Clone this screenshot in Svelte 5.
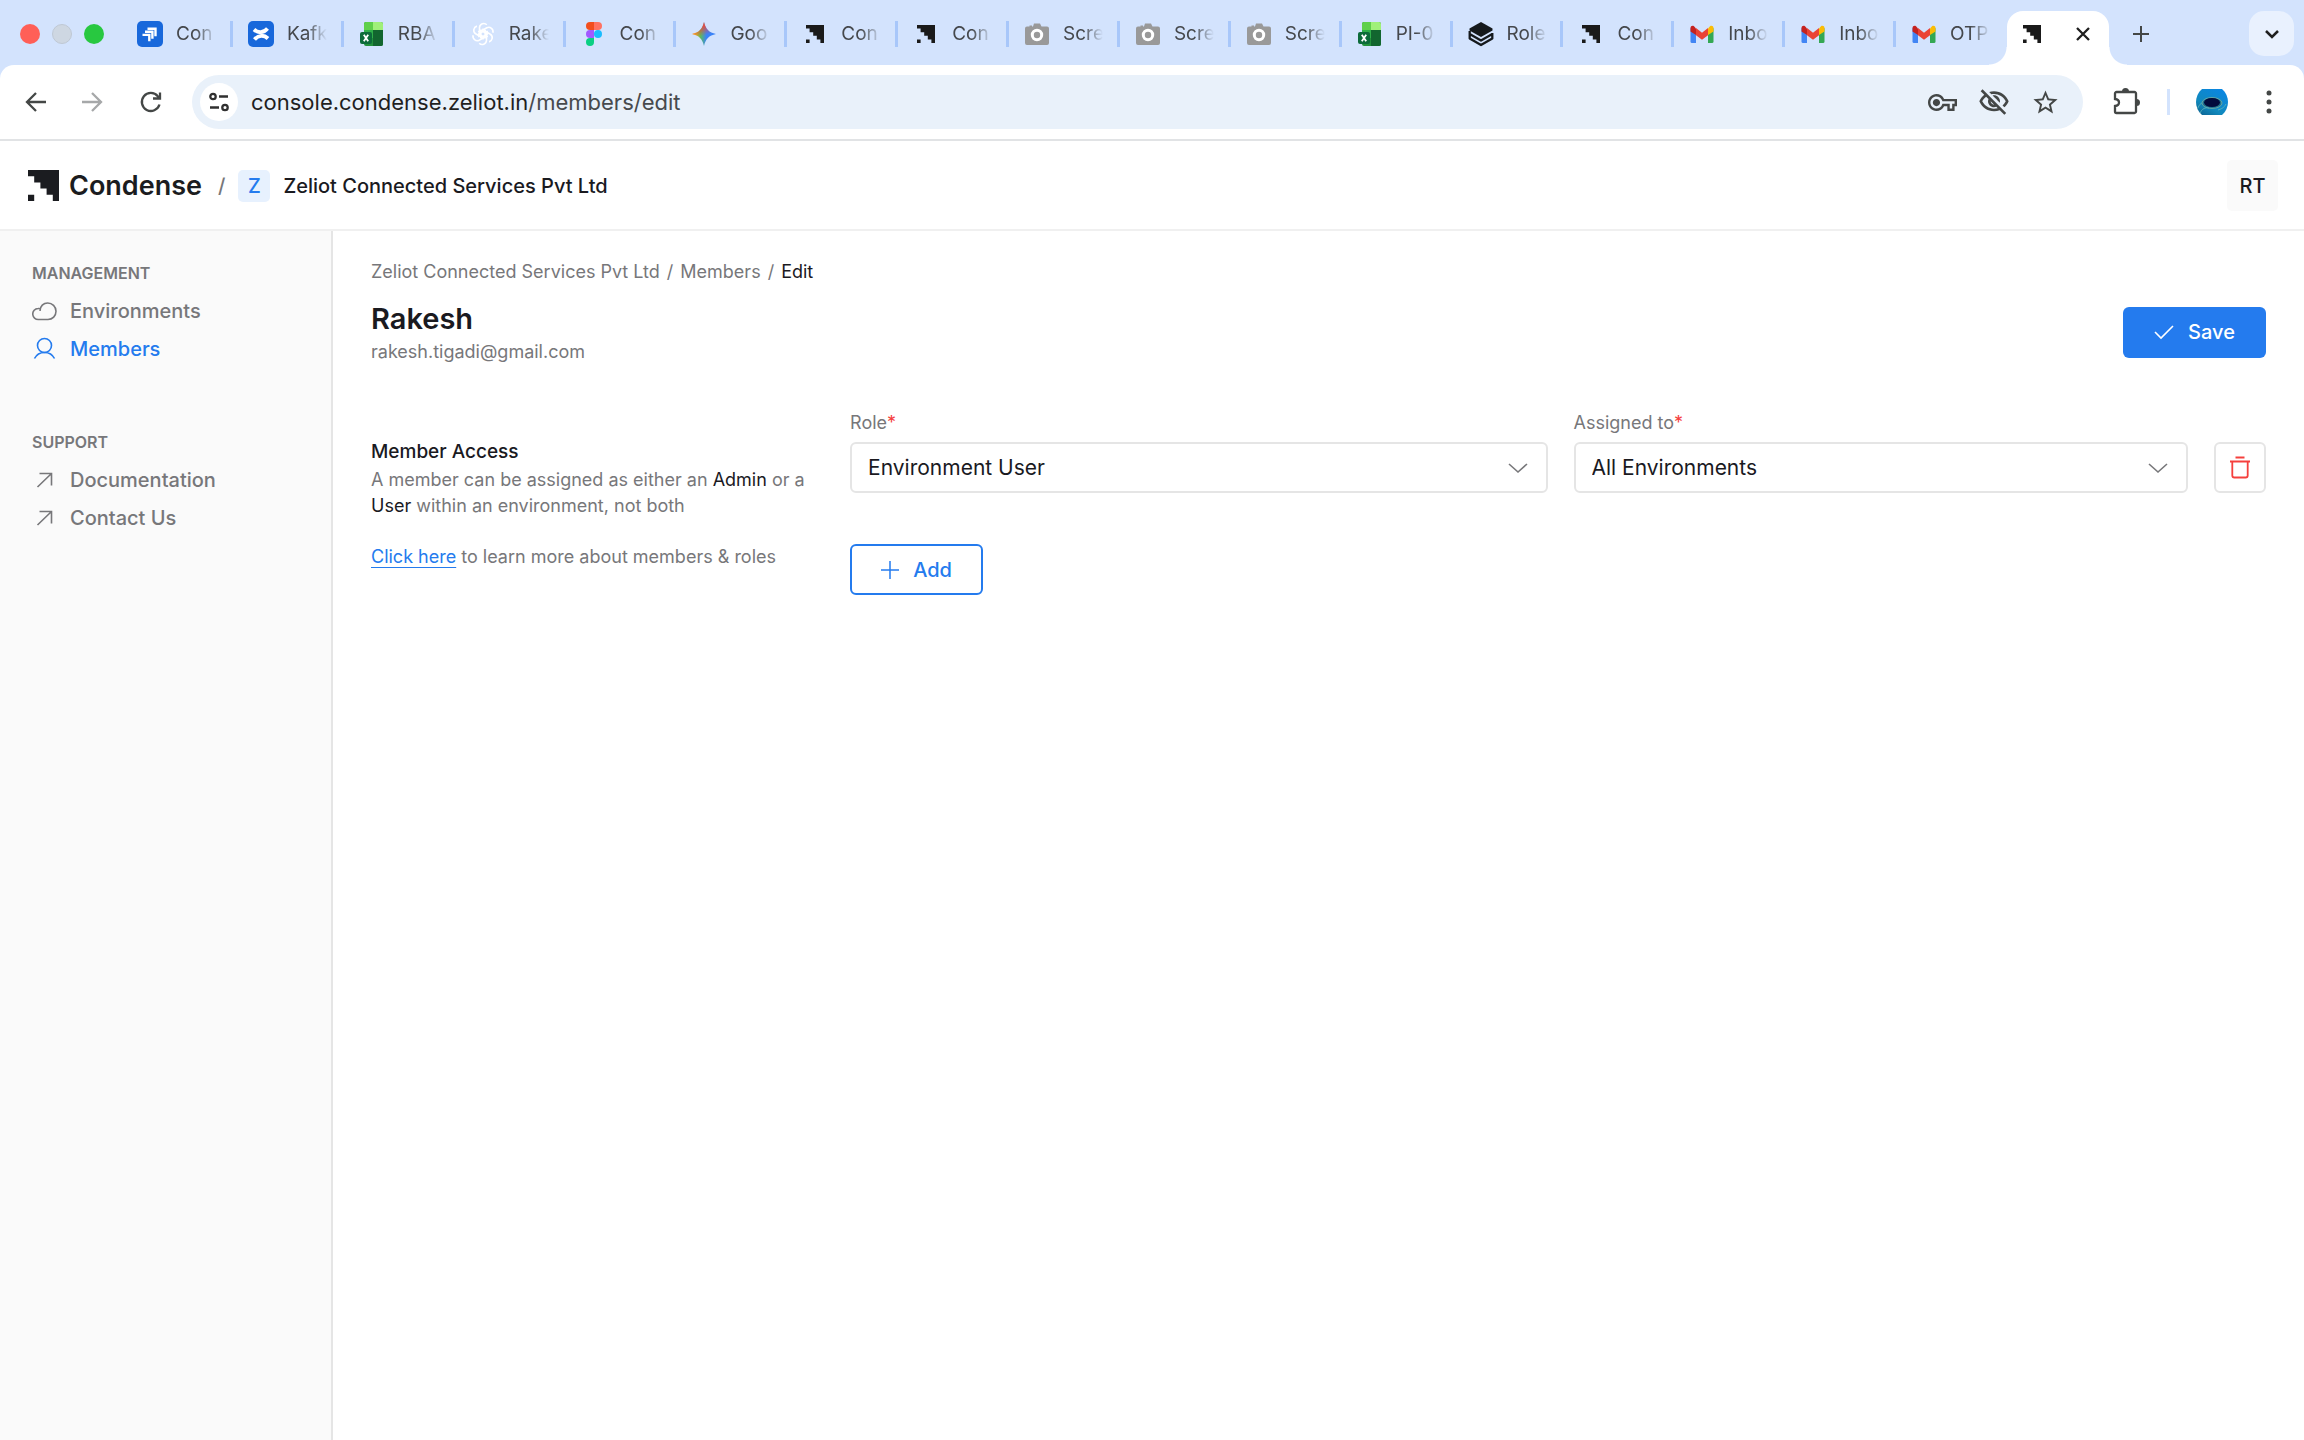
<script lang="ts">
  interface Tab {
    icon: string;
    title: string;
  }

  const tabs: Tab[] = [
    { icon: 'jira', title: 'Con' },
    { icon: 'confluence', title: 'Kafk' },
    { icon: 'excel', title: 'RBA' },
    { icon: 'openai', title: 'Rake' },
    { icon: 'figma', title: 'Con' },
    { icon: 'gemini', title: 'Goo' },
    { icon: 'condense', title: 'Con' },
    { icon: 'condense', title: 'Con' },
    { icon: 'camera', title: 'Scre' },
    { icon: 'camera', title: 'Scre' },
    { icon: 'camera', title: 'Scre' },
    { icon: 'excel', title: 'PI-0' },
    { icon: 'gitbook', title: 'Role' },
    { icon: 'condense', title: 'Con' },
    { icon: 'gmail', title: 'Inbo' },
    { icon: 'gmail', title: 'Inbo' },
    { icon: 'gmail', title: 'OTP' },
  ];

  const management = [
    { icon: 'cloud', label: 'Environments', active: false },
    { icon: 'user', label: 'Members', active: true },
  ];

  const support = [
    { icon: 'arrow', label: 'Documentation', active: false },
    { icon: 'arrow', label: 'Contact Us', active: false },
  ];

  let role = $state('Environment User');
  let assignedTo = $state('All Environments');
</script>

{#snippet mark()}
  <path d="M0 0H5V5H4V4H3V3H2V2H1V1H0ZM0 4H1V5H0Z" fill="currentColor" />
{/snippet}

{#snippet favicon(name: string)}
  <svg class="favicon" viewBox="0 0 26 26" aria-hidden="true">
    {#if name === 'jira'}
      <rect width="26" height="26" rx="5" fill="#1868db" />
      <path d="M10.500 7.700h8v7.500M8 10.800h7.400v7M5.500 13.900h6.800v6.400" stroke="#fff" stroke-width="2.400" fill="none" />
    {:else if name === 'confluence'}
      <rect width="26" height="26" rx="5" fill="#1868db" />
      <path d="M6 8.500c4 3.800 9.500 3.800 13.500-1" stroke="#fff" stroke-width="3.800" fill="none" />
      <path d="M6.500 18.500c4-4.800 9.500-4.800 13.500-1" stroke="#fff" stroke-width="3.800" fill="none" />
    {:else if name === 'excel'}
      <rect x="5" y="1" width="19" height="24" rx="2" fill="#22913b" />
      <path d="M7 1h7v8H5V3a2 2 0 0 1 2-2z" fill="#5fd04a" />
      <path d="M14 1h8a2 2 0 0 1 2 2v6H14z" fill="#a0f079" />
      <path d="M14 9h10v14a2 2 0 0 1-2 2h-8z" fill="#12662f" />
      <path d="M5 9h9v8H5z" fill="#2fb04a" />
      <rect x="1" y="11" width="12" height="12" rx="2" fill="#0c6b3a" />
      <path d="M4.800 13.800l4.400 6.400M9.200 13.800l-4.400 6.400" stroke="#fff" stroke-width="1.800" />
    {:else if name === 'openai'}
      <g fill="none" stroke="#fff" stroke-width="1.600">
        {#each [0, 60, 120, 180, 240, 300] as angle}
          <path d="M9.500 8.200V6.500a4.300 4.300 0 0 1 7.300-2.700M9.500 7v6.500l5.500 3.200 2.800-1.700" transform="rotate({angle} 13 13)" />
        {/each}
      </g>
    {:else if name === 'figma'}
      <path d="M13 1H9a4 4 0 0 0 0 8h4z" fill="#f24e1e" />
      <path d="M13 1h4a4 4 0 0 1 0 8h-4z" fill="#ff7262" />
      <path d="M13 9H9a4 4 0 0 0 0 8h4z" fill="#a259ff" />
      <circle cx="17" cy="13" r="4" fill="#1abcfe" />
      <path d="M13 17H9a4 4 0 1 0 4 4z" fill="#0acf83" />
    {:else if name === 'gemini'}
      <defs>
        <linearGradient id="geminiBase" x1="0" y1="0" x2="1" y2="0">
          <stop offset="0.100" stop-color="#f8c51c" />
          <stop offset="0.350" stop-color="#5bbd5a" />
          <stop offset="0.600" stop-color="#3b83f7" />
        </linearGradient>
        <linearGradient id="geminiTop" x1="0.400" y1="0" x2="0.600" y2="0.600">
          <stop offset="0.200" stop-color="#f54336" />
          <stop offset="0.900" stop-color="#f54336" stop-opacity="0" />
        </linearGradient>
      </defs>
      <path d="M13 1c1.500 7 5 10.500 12 12-7 1.500-10.500 5-12 12-1.500-7-5-10.500-12-12 7-1.500 10.500-5 12-12z" fill="url(#geminiBase)" />
      <path d="M13 1c1.500 7 5 10.500 12 12-7 1.500-10.500 5-12 12-1.500-7-5-10.500-12-12 7-1.500 10.500-5 12-12z" fill="url(#geminiTop)" />
    {:else if name === 'condense'}
      <g class="ink" transform="translate(4 4) scale(3.600)">{@render mark()}</g>
    {:else if name === 'camera'}
      <path d="M3 5.500h2.500V4.500h2.500v1h1L10 2.500h6l1.500 3H23a2 2 0 0 1 2 2V22a2 2 0 0 1-2 2H3a2 2 0 0 1-2-2V7.500a2 2 0 0 1 2-2z" fill="#999" />
      <circle cx="13" cy="14" r="4.700" fill="#999" stroke="#fff" stroke-width="3" />
    {:else if name === 'gitbook'}
      <path d="M13 1l11.500 6.500v2L13 16 1.500 9.500v-2z" fill="#15191c" />
      <path d="M1.700 10v3L13 19.500 24.300 13M1.700 13v4.500L13 24l11.300-6.500V12" fill="none" stroke="#15191c" stroke-width="2.300" stroke-linejoin="round" />
    {:else if name === 'gmail'}
      <path d="M1.500 7v13.500A1.500 1.500 0 0 0 3 22h4V11z" fill="#4285f4" />
      <path d="M24.500 7v13.500A1.500 1.500 0 0 1 23 22h-4V11z" fill="#34a853" />
      <path d="M19 7.500L21 5.300c1.400-1 3.500-.300 3.500 1.700v3.500L19 14z" fill="#fbbc04" />
      <path d="M7 7.500L5 5.300C3.600 4.300 1.500 5 1.500 7v3.500L7 14z" fill="#c5221f" />
      <path d="M7 7l6 4.800L19 7v7.300l-6 4.500-6-4.500z" fill="#ea4335" />
    {/if}
  </svg>
{/snippet}

{#snippet navIcon(name: string)}
  <svg class="nav-icon" viewBox="0 0 26 26" aria-hidden="true">
    {#if name === 'cloud'}
      <path d="M8.500 21.500H6.500a5.500 5.500 0 0 1-.500-11c1.200-.100 2.200.200 2.200.200M8 13c0-5 3.500-8 7.700-8a8.300 8.300 0 0 1 8.300 8.300c0 4.700-3.500 8.200-8 8.200H8" />
    {:else if name === 'user'}
      <circle cx="12.500" cy="9.500" r="7" />
      <path d="M2.500 22.500c2-4 5.500-6 10-6s8 2 10 6" />
    {:else}
      <path d="M7.500 6.500h12v12M19.500 6.500L5.500 20" />
    {/if}
  </svg>
{/snippet}

{#snippet navList(items: { icon: string; label: string; active: boolean }[])}
  <ul>
    {#each items as item}
      <li>
        <a href="#{item.label}" class:active={item.active}>
          {@render navIcon(item.icon)}
          {item.label}
        </a>
      </li>
    {/each}
  </ul>
{/snippet}

<div class="window">
  <div class="tab-strip">
    <div class="lights">
      <span class="light red"></span>
      <span class="light grey"></span>
      <span class="light green"></span>
    </div>
    <div class="tabs">
      {#each tabs as tab}
        <div class="tab">
          {@render favicon(tab.icon)}
          <span class="tab-title">{tab.title}</span>
        </div>
      {/each}
    </div>
    <div class="tab-active">
      {@render favicon('condense')}
      <button class="plain" aria-label="Close tab">
        <svg width="16" height="16" viewBox="0 0 16 16"><path d="M2 2l12 12M14 2L2 14" stroke="#1f1f1f" stroke-width="2.300" /></svg>
      </button>
    </div>
    <button class="plain new-tab" aria-label="New tab">
      <svg width="18" height="18" viewBox="0 0 18 18"><path d="M9 1v16M1 9h16" stroke="#444746" stroke-width="2" /></svg>
    </button>
    <button class="tab-search" aria-label="Search tabs">
      <svg width="16" height="16" viewBox="0 0 16 16"><path d="M2 5l6 6 6-6" fill="none" stroke="#1f1f1f" stroke-width="2.500" /></svg>
    </button>
  </div>

  <div class="toolbar">
    <div class="history">
      <button class="plain" aria-label="Back">
        <svg width="24" height="24" viewBox="0 0 24 24"><path d="M23 12H4M13 3l-9 9 9 9" fill="none" stroke="#444746" stroke-width="2.300" /></svg>
      </button>
      <button class="plain" aria-label="Forward">
        <svg width="24" height="24" viewBox="0 0 24 24"><path d="M1 12h19M11 3l9 9-9 9" fill="none" stroke="#a6a8a9" stroke-width="2.300" /></svg>
      </button>
      <button class="plain" aria-label="Reload">
        <svg width="24" height="24" viewBox="0 0 24 24"><path d="M20.500 14.500A9 9 0 1 1 18.800 6.200l2 2M21 2.500v6h-7" fill="none" stroke="#444746" stroke-width="2.300" /></svg>
      </button>
    </div>

    <div class="address">
      <button class="site-info" aria-label="View site information">
        <svg width="22" height="22" viewBox="0 0 22 22" fill="none" stroke="#303030" stroke-width="2.300">
          <circle cx="5" cy="5.500" r="2.700" /><path d="M11 5.500h9M2 16.500h9" /><circle cx="17" cy="16.500" r="2.700" />
        </svg>
      </button>
      <span class="url">console.condense.zeliot.in<span class="path">/members/edit</span></span>
      <div class="address-actions">
        <button class="plain" aria-label="Passwords">
          <svg width="29" height="29" viewBox="0 0 24 24"><path fill="#444746" d="M22 19h-6v-4h-2.680c-1.140 2.420-3.600 4-6.320 4-3.860 0-7-3.140-7-7s3.140-7 7-7c2.720 0 5.170 1.580 6.320 4H24v6h-2v4zm-4-2h2v-4h2v-2H11.940l-.230-.670C11.010 8.340 9.110 7 7 7c-2.760 0-5 2.240-5 5s2.240 5 5 5c2.110 0 4.010-1.340 4.710-3.330l.230-.670H18v4zM7 15c-1.650 0-3-1.350-3-3s1.350-3 3-3 3 1.350 3 3-1.350 3-3 3z" /></svg>
        </button>
        <button class="plain" aria-label="Third-party cookies blocked">
          <svg width="32" height="32" viewBox="0 0 24 24"><path fill="#444746" d="M12 6c3.790 0 7.170 2.130 8.820 5.500-.590 1.220-1.420 2.270-2.410 3.120l1.410 1.410c1.390-1.230 2.490-2.770 3.180-4.530C21.270 7.110 17 4 12 4c-1.270 0-2.490.200-3.640.570l1.650 1.650C10.660 6.090 11.320 6 12 6zm-1.070 1.140L13 9.210c.570.250 1.030.710 1.280 1.280l2.070 2.070c.080-.340.140-.700.140-1.070C16.500 9.010 14.480 7 12 7c-.370 0-.720.050-1.070.140zM2.010 3.870l2.680 2.680C3.060 7.830 1.770 9.530 1 11.500 2.730 15.890 7 19 12 19c1.520 0 2.980-.290 4.320-.820l3.420 3.420 1.410-1.410L3.420 2.450 2.010 3.870zm7.500 7.500l2.610 2.610c-.040.010-.080.020-.120.020-1.380 0-2.500-1.120-2.500-2.500 0-.050.010-.080.010-.130zm-3.400-3.400l1.750 1.750c-.230.550-.360 1.150-.360 1.780 0 2.480 2.020 4.500 4.500 4.500.630 0 1.230-.130 1.770-.360l.980.980c-.880.240-1.800.380-2.750.380-3.790 0-7.170-2.130-8.820-5.500.700-1.430 1.720-2.610 2.930-3.530z" /></svg>
        </button>
        <button class="plain" aria-label="Bookmark this tab">
          <svg width="29" height="29" viewBox="0 0 24 24"><path fill="#444746" d="M22 9.240l-7.190-.620L12 2 9.190 8.630 2 9.240l5.460 4.730L5.820 21 12 17.270 18.180 21l-1.630-7.030L22 9.240zM12 15.400l-3.760 2.270 1-4.280-3.320-2.880 4.380-.380L12 6.100l1.710 4.040 4.380.380-3.320 2.880 1 4.280L12 15.400z" /></svg>
        </button>
      </div>
    </div>

    <div class="toolbar-end">
      <button class="plain" aria-label="Extensions">
        <svg width="30" height="30" viewBox="0 0 30 30">
          <path d="M5.500 5h18a1.500 1.500 0 0 1 1.500 1.500v18a1.500 1.500 0 0 1-1.500 1.500h-18A1.500 1.500 0 0 1 4 24.500V19c2.500-.300 4-1.600 4-3.500s-1.500-3.200-4-3.500V6.500A1.500 1.500 0 0 1 5.500 5z" fill="none" stroke="#444746" stroke-width="2.300" />
          <path d="M11 4.500a3.500 3.500 0 0 1 7 0zM25.500 12a3.500 3.500 0 0 1 0 7z" fill="#444746" />
        </svg>
      </button>
      <span class="divider"></span>
      <button class="plain" aria-label="Profile">
        <svg width="32" height="26" viewBox="0 0 32 26">
          <defs>
            <linearGradient id="water" x1="0" y1="1" x2="0.700" y2="0">
              <stop offset="0" stop-color="#0c5f8c" />
              <stop offset="0.400" stop-color="#1189bd" />
              <stop offset="1" stop-color="#0a86e0" />
            </linearGradient>
            <clipPath id="avatar"><path d="M6 0h20c8 7 8 19 0 26H6C-2 19-2 7 6 0z" /></clipPath>
          </defs>
          <g clip-path="url(#avatar)">
            <rect width="32" height="26" fill="url(#water)" />
            <ellipse cx="16" cy="14" rx="10" ry="5.500" fill="#1f7390" stroke="#62a5a5" />
            <ellipse cx="16" cy="13.500" rx="8" ry="4.500" fill="#020b3c" />
            <path d="M1 21c2-5 3-6 5-7M4 24c2-4 5-6 9-5M22 21c3-1 6-2 8-6" stroke="#57b0bb" stroke-width="1" fill="none" />
          </g>
        </svg>
      </button>
      <button class="plain" aria-label="Menu">
        <svg width="6" height="24" viewBox="0 0 6 24" fill="#444746"><circle cx="3" cy="3" r="2.500" /><circle cx="3" cy="12" r="2.500" /><circle cx="3" cy="21" r="2.500" /></svg>
      </button>
    </div>
  </div>

  <header class="app-header">
    <a class="brand" href="#home">
      <svg width="31" height="31" viewBox="0 0 5 5" aria-hidden="true">{@render mark()}</svg>
      Condense
    </a>
    <span class="slash">/</span>
    <span class="org-badge">Z</span>
    <span class="org-name">Zeliot Connected Services Pvt Ltd</span>
    <button class="account">RT</button>
  </header>

  <div class="body">
    <nav class="sidebar">
      <section>
        <h2>MANAGEMENT</h2>
        {@render navList(management)}
      </section>
      <section>
        <h2>SUPPORT</h2>
        {@render navList(support)}
      </section>
    </nav>

    <main>
      <div class="breadcrumb">
        <a href="#org">Zeliot Connected Services Pvt Ltd</a>
        <span>/</span>
        <a href="#members">Members</a>
        <span>/</span>
        <span class="current">Edit</span>
      </div>

      <div class="page-head">
        <div>
          <h1>Rakesh</h1>
          <p class="email">rakesh.tigadi@gmail.com</p>
        </div>
        <button class="save">
          <svg width="20" height="20" viewBox="0 0 20 20"><path d="M1 10l6 6L19 4" fill="none" stroke="#fff" stroke-width="1.600" /></svg>
          Save
        </button>
      </div>

      <div class="access">
        <div class="access-info">
          <h3>Member Access</h3>
          <p>A member can be assigned as either an <b>Admin</b> or a <b>User</b> within an environment, not both</p>
          <p class="learn"><a href="#docs">Click here</a> to learn more about members &amp; roles</p>
        </div>

        <div class="access-form">
          <div class="fields">
            <div class="field">
              <label for="role">Role<span class="required">*</span></label>
              <div class="select">
                <select id="role" bind:value={role}>
                  <option>Environment User</option>
                </select>
                <svg width="20" height="20" viewBox="0 0 20 20"><path d="M1 6l9 8 9-8" /></svg>
              </div>
            </div>
            <div class="field">
              <label for="assigned">Assigned to<span class="required">*</span></label>
              <div class="select">
                <select id="assigned" bind:value={assignedTo}>
                  <option>All Environments</option>
                </select>
                <svg width="20" height="20" viewBox="0 0 20 20"><path d="M1 6l9 8 9-8" /></svg>
              </div>
            </div>
            <button class="remove" aria-label="Remove role">
              <svg width="20" height="24" viewBox="0 0 20 24" fill="none" stroke="#f5403d" stroke-width="1.800">
                <path d="M5.500 1.500h9M0 5.500h20M2.300 5.500V19.500a2 2 0 0 0 2 2h11.400a2 2 0 0 0 2-2V5.500" />
              </svg>
            </button>
          </div>
          <button class="add">
            <svg width="18" height="18" viewBox="0 0 18 18"><path d="M9 0v18M0 9h18" stroke="#247bee" stroke-width="1.500" /></svg>
            Add
          </button>
        </div>
      </div>
    </main>
  </div>
</div>

<style>
  :global(body) {
    background: #fff;
  }

  .window {
    display: flex;
    flex-direction: column;
    min-height: 100vh;
    font-family: Inter, "Liberation Sans", sans-serif;
    color: #1a1a1f;
  }

  .window *,
  .window *::before,
  .window *::after {
    box-sizing: border-box;
  }

  h1, h2, h3, p, ul {
    margin: 0;
    padding: 0;
  }

  a {
    color: inherit;
    text-decoration: none;
  }

  button,
  select {
    font: inherit;
    color: inherit;
    cursor: pointer;
  }

  button svg,
  .favicon {
    display: block;
    flex: none;
  }

  .plain {
    padding: 0;
    border: 0;
    background: none;
  }

  .ink {
    color: #1a1a1a;
  }

  /* tab strip */
  .tab-strip {
    display: flex;
    align-items: center;
    height: 65px;
    padding: 2px 10px 0 20px;
    background: #d3e3fd;
  }

  .lights {
    display: flex;
    gap: 12px;
    width: 102px;
  }

  .light {
    width: 20px;
    height: 20px;
    border-radius: 50%;
  }

  .red { background: #ff5f57; }
  .grey { background: #ced7e2; border: 1px solid #bfc8d4; }
  .green { background: #28c840; }

  .tabs {
    display: flex;
    flex: 1;
    min-width: 0;
  }

  .tab {
    display: flex;
    align-items: center;
    gap: 13px;
    flex: 1;
    min-width: 0;
    height: 26px;
    padding: 0 0 0 15px;
    border-right: 3px solid #a8c7fa;
  }

  .tab:last-child {
    border-color: transparent;
  }

  .favicon {
    width: 26px;
    height: 26px;
  }

  .tab-title {
    white-space: nowrap;
    font-size: 19px;
    line-height: 26px;
    color: #45484c;
    mask-image: linear-gradient(to right, #000 20px, transparent 40px);
  }

  .tab-active {
    position: relative;
    display: flex;
    align-items: center;
    justify-content: space-between;
    align-self: flex-end;
    width: 102px;
    height: 54px;
    padding: 0 18px 8px 12px;
    background: #fff;
    border-radius: 16px 16px 0 0;
  }

  .tab-active::before,
  .tab-active::after {
    content: '';
    position: absolute;
    bottom: 0;
    width: 18px;
    height: 18px;
  }

  .tab-active::before {
    right: 100%;
    background: radial-gradient(circle at 0 0, transparent 17px, #fff 18px);
  }

  .tab-active::after {
    left: 100%;
    background: radial-gradient(circle at 100% 0, transparent 17px, #fff 18px);
  }

  .new-tab {
    margin-left: 23px;
  }

  .tab-search {
    display: flex;
    align-items: center;
    justify-content: center;
    width: 45px;
    height: 45px;
    margin-left: 99px;
    border: 0;
    border-radius: 15px;
    background: #e9f1fe;
  }

  /* toolbar */
  .toolbar {
    display: flex;
    align-items: center;
    height: 76px;
    padding: 0 32px 0 23px;
    background: linear-gradient(#d3e3fd, #d3e3fd 16px, #fff 16px);
    border-bottom: 2px solid #e1e3e5;
    position: relative;
    z-index: 0;
  }

  .toolbar::before {
    content: '';
    position: absolute;
    z-index: -1;
    inset: 0;
    background: #fff;
    border-radius: 14px 14px 0 0;
  }

  .history {
    display: flex;
    gap: 34px;
  }

  .address {
    display: flex;
    align-items: center;
    flex: 1;
    height: 54px;
    margin-left: 29px;
    padding: 0 23px 0 8px;
    border-radius: 27px;
    background: #e9f1fa;
  }

  .site-info {
    display: flex;
    align-items: center;
    justify-content: center;
    width: 38px;
    height: 38px;
    padding: 0;
    border: 0;
    border-radius: 50%;
    background: #fff;
  }

  .url {
    flex: 1;
    margin-left: 13px;
    font-size: 22px;
    color: #1f1f1f;
  }

  .path {
    color: #474a4d;
  }

  .address-actions {
    display: flex;
    align-items: center;
    gap: 21px;
  }

  .toolbar-end {
    display: flex;
    align-items: center;
    gap: 26px;
    margin-left: 28px;
  }

  .toolbar-end button:last-child {
    margin-left: 12px;
  }

  .divider {
    width: 3px;
    height: 26px;
    background: #d3e3fd;
  }

  /* app header */
  .app-header {
    display: flex;
    align-items: center;
    height: 90px;
    padding: 1px 26px 0 28px;
    border-bottom: 2px solid #f0f0f0;
    font-size: 20px;
    font-weight: 500;
  }

  .brand {
    display: flex;
    align-items: center;
    gap: 10px;
    font-size: 27px;
    font-weight: 600;
    color: #1b1c20;
  }

  .slash {
    margin: 0 13px 0 16px;
    color: #77777a;
  }

  .org-badge {
    display: flex;
    align-items: center;
    justify-content: center;
    width: 32px;
    height: 32px;
    border-radius: 5px;
    background: #e7f1fe;
    color: #247bee;
  }

  .org-name {
    margin-left: 13px;
  }

  .account {
    width: 51px;
    height: 51px;
    margin-left: auto;
    padding: 0;
    border: 0;
    border-radius: 5px;
    background: #fafafa;
  }

  /* body */
  .body {
    display: flex;
    flex: 1;
  }

  .sidebar {
    flex: none;
    width: 333px;
    padding: 31px 32px;
    background: #fafafa;
    border-right: 2px solid #e5e5e5;
    color: #77777a;
  }

  .sidebar section + section {
    margin-top: 63px;
  }

  .sidebar h2 {
    font-size: 16px;
    line-height: 22px;
    font-weight: 600;
  }

  .sidebar ul {
    margin-top: 8px;
    list-style: none;
  }

  .sidebar a {
    display: flex;
    align-items: center;
    gap: 12px;
    height: 38px;
    font-size: 20px;
    font-weight: 500;
  }

  .sidebar a.active {
    color: #247bee;
  }

  .nav-icon {
    width: 26px;
    height: 26px;
    fill: none;
    stroke: currentColor;
    stroke-width: 1.6;
  }

  main {
    flex: 1;
    padding: 28px 38px;
  }

  .breadcrumb {
    display: flex;
    gap: 7px;
    font-size: 18px;
    line-height: 26px;
    color: #77777a;
  }

  .current {
    color: #1a1a1f;
  }

  .page-head {
    display: flex;
    align-items: center;
    justify-content: space-between;
    margin-top: 14px;
  }

  h1 {
    font-size: 29px;
    line-height: 40px;
    font-weight: 600;
  }

  .email {
    font-size: 18px;
    line-height: 26px;
    color: #77777a;
  }

  .save,
  .add {
    display: flex;
    align-items: center;
    justify-content: center;
    gap: 14px;
    height: 51px;
    border-radius: 6px;
    font-size: 20px;
    font-weight: 500;
  }

  .save {
    width: 143px;
    border: 0;
    background: #247bee;
    color: #fff;
  }

  .access {
    display: grid;
    grid-template-columns: 24fr 75fr;
    gap: 26px;
    margin-top: 45px;
  }

  .access-info {
    padding-top: 28px;
    font-size: 18px;
    line-height: 26px;
    color: #77777a;
  }

  .access-info h3 {
    margin-bottom: 1px;
    font-size: 19px;
    line-height: 28px;
    font-weight: 500;
    color: #1a1a1f;
  }

  .access-info b {
    font-weight: 400;
    color: #1a1a1f;
  }

  .access-info .learn {
    margin-top: 25px;
  }

  .learn a {
    color: #247bee;
    text-decoration: underline;
    text-underline-offset: 4px;
  }

  .fields {
    display: grid;
    grid-template-columns: 698fr 615fr 52px;
    align-items: end;
    gap: 26px;
  }

  .field label {
    display: block;
    margin-bottom: 6px;
    font-size: 18px;
    line-height: 26px;
    color: #77777a;
  }

  .required {
    color: #f5403d;
  }

  .select {
    position: relative;
  }

  .select select {
    display: block;
    width: 100%;
    height: 51px;
    padding: 0 48px 0 16px;
    border: 2px solid #e5e5e5;
    border-radius: 6px;
    background: #fff;
    font-size: 21px;
    appearance: none;
  }

  .select svg {
    position: absolute;
    top: 16px;
    right: 20px;
    fill: none;
    stroke: #77777a;
    stroke-width: 1.6;
    pointer-events: none;
  }

  .remove {
    display: flex;
    align-items: center;
    justify-content: center;
    height: 51px;
    padding: 0;
    border: 2px solid #e5e5e5;
    border-radius: 6px;
    background: #fff;
  }

  .add {
    width: 133px;
    margin-top: 51px;
    border: 2px solid #247bee;
    background: #fff;
    color: #247bee;
  }
</style>
